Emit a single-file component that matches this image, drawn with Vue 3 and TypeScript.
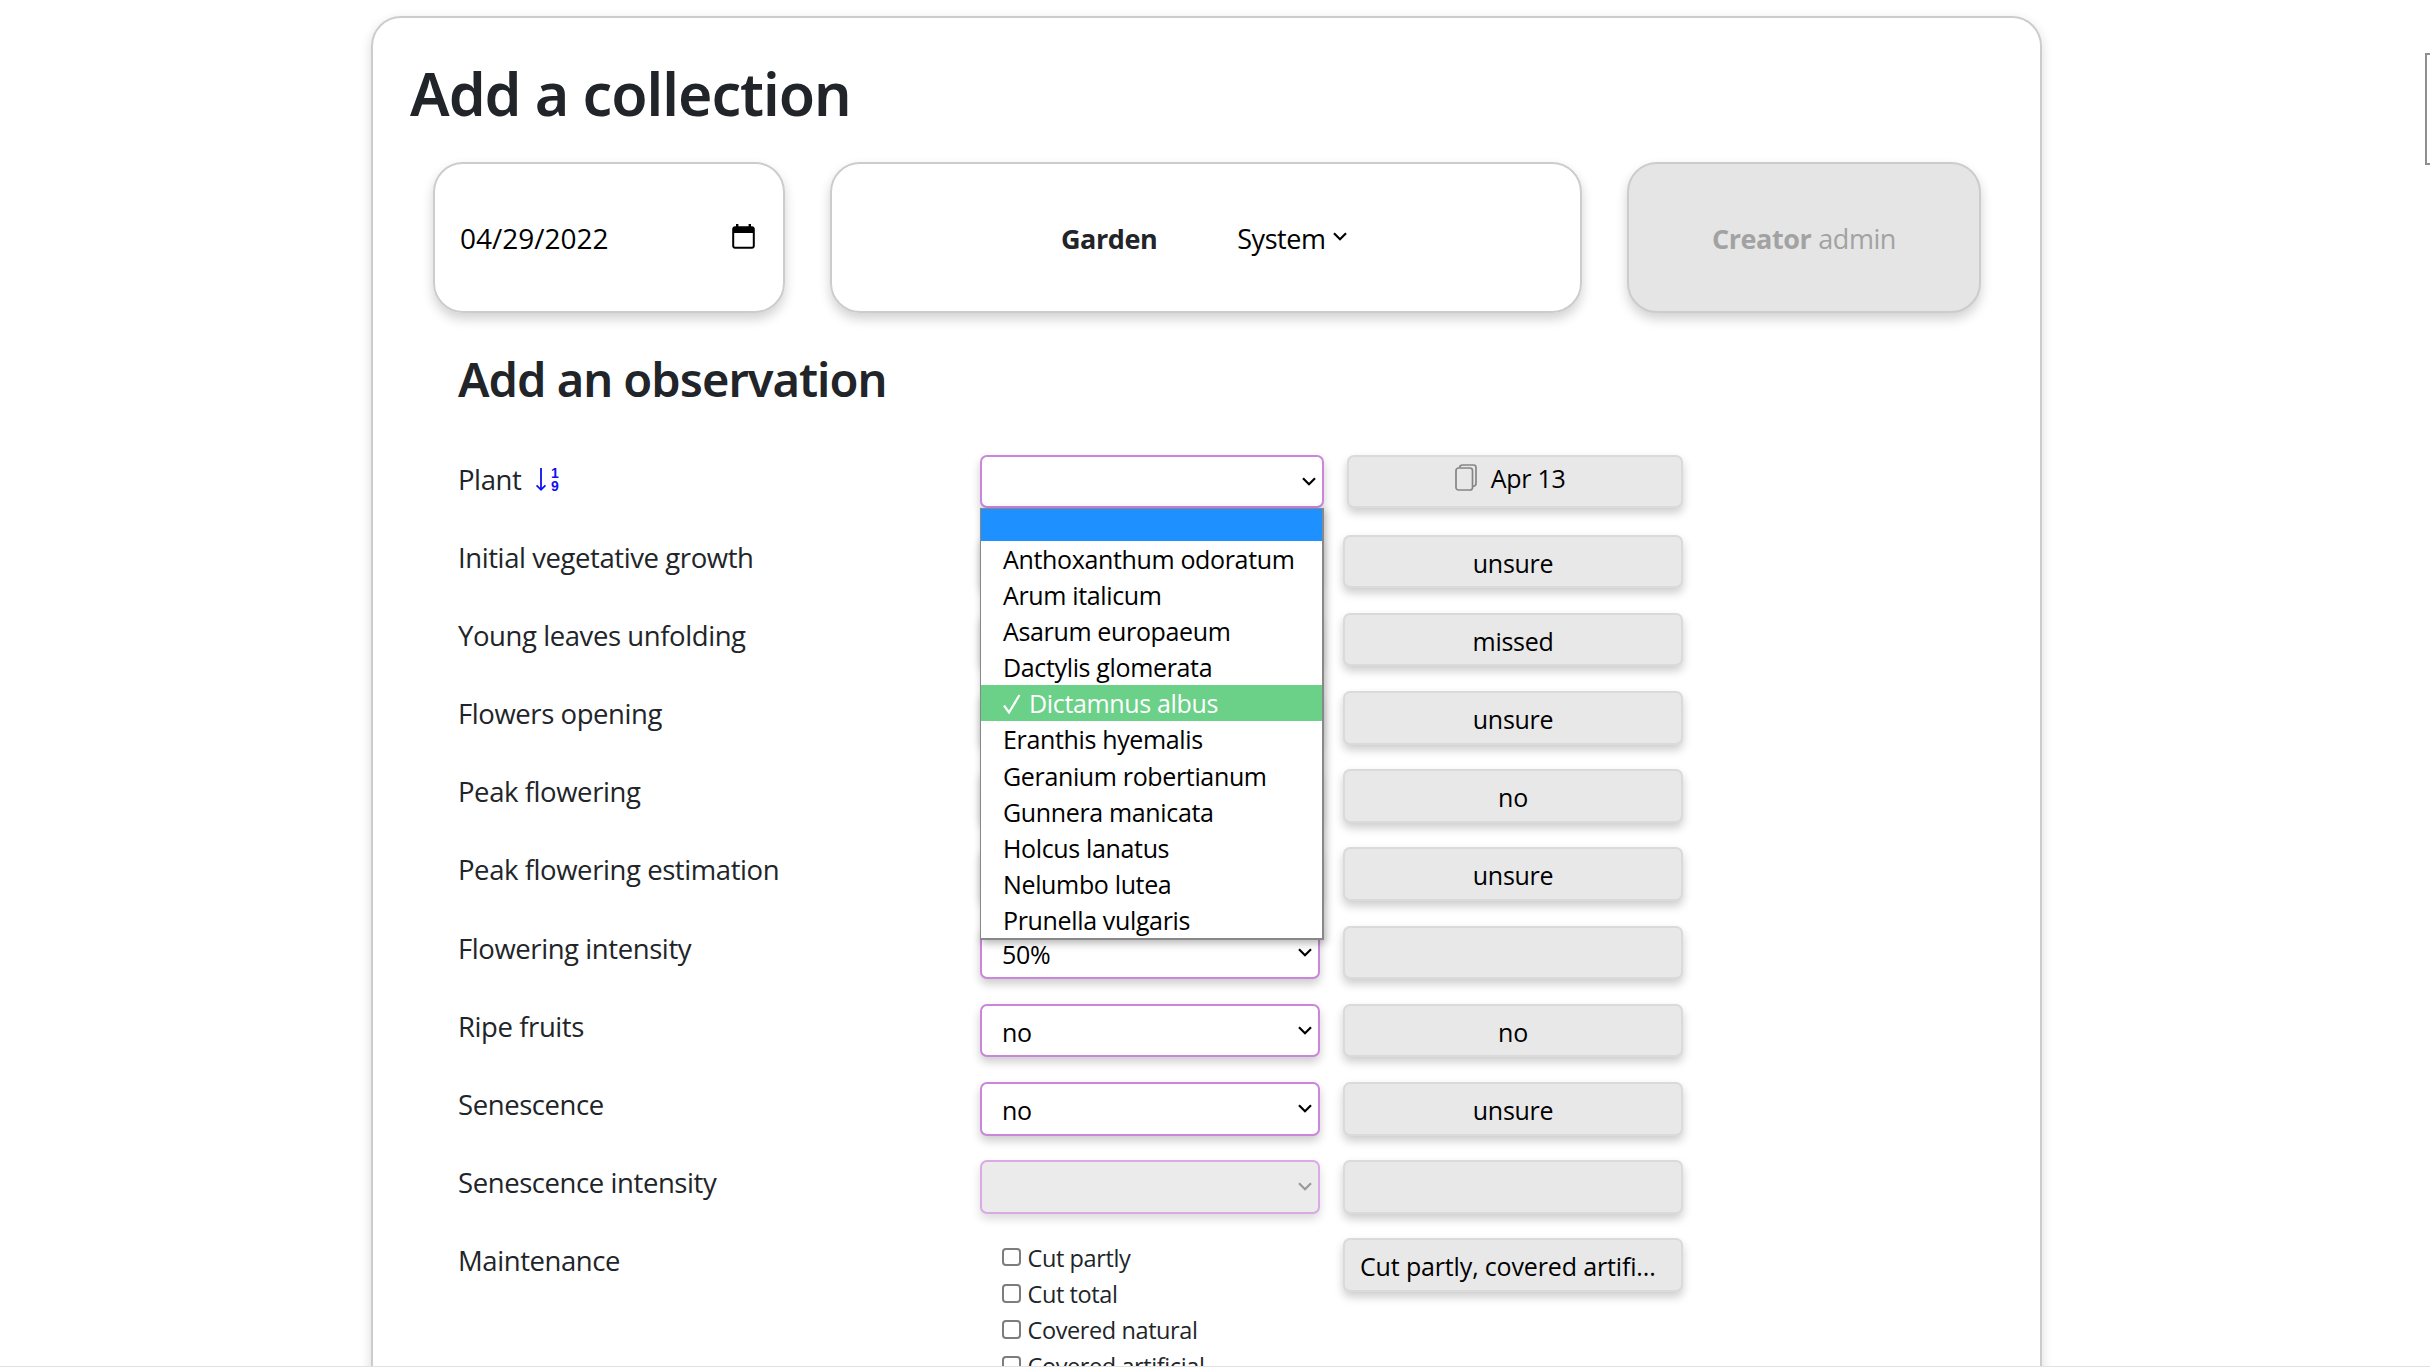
<script setup lang="ts">
interface Phase {
  label: string
  value: string
  previous: string
  disabled?: boolean
}

const phases: Phase[] = [
  { label: 'Initial vegetative growth', value: '', previous: 'unsure' },
  { label: 'Young leaves unfolding', value: '', previous: 'missed' },
  { label: 'Flowers opening', value: '', previous: 'unsure' },
  { label: 'Peak flowering', value: '', previous: 'no' },
  { label: 'Peak flowering estimation', value: '', previous: 'unsure' },
  { label: 'Flowering intensity', value: '50%', previous: '' },
  { label: 'Ripe fruits', value: 'no', previous: 'no' },
  { label: 'Senescence', value: 'no', previous: 'unsure' },
  { label: 'Senescence intensity', value: '', previous: '', disabled: true },
]

const plants: string[] = [
  'Anthoxanthum odoratum',
  'Arum italicum',
  'Asarum europaeum',
  'Dactylis glomerata',
  'Dictamnus albus',
  'Eranthis hyemalis',
  'Geranium robertianum',
  'Gunnera manicata',
  'Holcus lanatus',
  'Nelumbo lutea',
  'Prunella vulgaris',
]
const observed = 'Dictamnus albus'

const maintenance: string[] = ['Cut partly', 'Cut total', 'Covered natural', 'Covered artificial']
</script>

<template>
  <div class="page">
    <main class="collection">
      <h1>Add a collection</h1>

      <div class="meta">
        <div class="tile date">
          <span>04/29/2022</span>
          <svg class="calendar" viewBox="0 0 23 25">
            <path d="M3 3.2h17a1.8 1.8 0 0 1 1.8 1.8v17a1.8 1.8 0 0 1-1.8 1.8H3A1.8 1.8 0 0 1 1.2 22V5A1.8 1.8 0 0 1 3 3.2z" fill="none" stroke="#000" stroke-width="2" />
            <path d="M1 3h21v6H1zM4 0h2.4v4H4zM16.6 0H19v4h-2.4z" fill="#000" />
          </svg>
        </div>
        <div class="tile garden">
          <b>Garden</b>
          <span class="system">System</span>
          <svg class="chevron small" viewBox="0 0 14 9"><path d="M1 1.2l6 6 6-6" /></svg>
        </div>
        <div class="tile creator"><b>Creator</b><span>admin</span></div>
      </div>

      <h2>Add an observation</h2>

      <div class="rows">
        <div class="row">
          <div class="label">
            Plant
            <svg class="sort" viewBox="0 0 25 25">
              <path d="M6 1v21M1.600 18.400L6 22.800l4.400-4.400" fill="none" stroke="#1010f5" stroke-width="1.800" />
              <text x="20" y="10.500" text-anchor="middle">1</text>
              <text x="20" y="24" text-anchor="middle">9</text>
            </svg>
          </div>
          <div class="cell">
            <div class="select open">
              <svg class="chevron" viewBox="0 0 14 9"><path d="M1 1.2l6 6 6-6" /></svg>
            </div>
            <ul class="options">
              <li class="blank"></li>
              <li v-for="plant in plants" :key="plant" :class="{ observed: plant === observed }">
                <svg v-if="plant === observed" class="tick" viewBox="0 0 18 20"><path d="M1 11.500l5 7L16.500 1" /></svg>{{ plant }}
              </li>
            </ul>
          </div>
          <div class="previous copy">
            <svg class="pages" viewBox="0 0 22 27">
              <rect x="1" y="4" width="16.500" height="22" rx="2.500" />
              <path d="M4.500 3.500Q5 1 7.500 1H18.500Q21 1 21 3.500V19.500Q21 22 18 22.500" />
            </svg>
            Apr 13
          </div>
        </div>

        <div v-for="phase in phases" :key="phase.label" class="row">
          <div class="label">{{ phase.label }}</div>
          <div class="cell">
            <div class="select" :class="{ disabled: phase.disabled }">
              {{ phase.value }}
              <svg class="chevron" viewBox="0 0 14 9"><path d="M1 1.2l6 6 6-6" /></svg>
            </div>
          </div>
          <div class="previous">{{ phase.previous }}</div>
        </div>

        <div class="row">
          <div class="label">Maintenance</div>
          <div class="checks">
            <label v-for="item in maintenance" :key="item"><i></i>{{ item }}</label>
          </div>
          <div class="previous summary">Cut partly, covered artifi...</div>
        </div>
      </div>
    </main>
    <div class="side-box"></div>
  </div>
</template>

<style>
body {
  background: #fff;
}
</style>

<style scoped>
.page {
  position: relative;
  box-sizing: border-box;
  height: 1367px;
  overflow: hidden;
  padding-top: 16px;
  font-family: "Open Sans", "Noto Sans", sans-serif;
  color: #212529;
}
.page *,
.page::after {
  box-sizing: border-box;
}
.page::after {
  content: "";
  position: absolute;
  left: 0;
  right: 0;
  bottom: 0;
  height: 1px;
  background: #e2e2e2;
}
.collection {
  width: 1671px;
  height: 1500px;
  margin-left: 371px;
  padding: 40px 59px 0 37px;
  border: 2px solid #ccc;
  border-radius: 30px;
  box-shadow: 0 4px 12px rgba(0, 0, 0, 0.15);
}
h1,
h2 {
  margin: 0;
  font-family: "Noto Sans", sans-serif;
  font-weight: 600;
}
h1 {
  font-size: 59px;
  line-height: 70px;
  letter-spacing: -1.02px;
}
h2 {
  margin: 36px 0 0 48px;
  font-size: 47px;
  line-height: 60px;
  letter-spacing: -1px;
}
.meta {
  display: flex;
  gap: 45px;
  height: 151px;
  margin: 34px 0 0 23px;
  font-size: 27px;
  letter-spacing: -0.45px;
}
.tile {
  display: flex;
  align-items: center;
  padding-top: 1px;
  border: 2px solid #ccc;
  border-radius: 30px;
  box-shadow: 0 6px 12px rgba(0, 0, 0, 0.18);
}
.date {
  width: 352px;
  justify-content: space-between;
  padding: 0 28px 0 25px;
  font-size: 28px;
  letter-spacing: 0;
  color: #000;
}
.calendar {
  width: 23px;
  height: 25px;
  margin-bottom: 2px;
}
.garden {
  width: 752px;
  padding-left: 229px;
}
.system {
  margin-left: 80px;
  color: #000;
}
.creator {
  flex: 1;
  justify-content: center;
  gap: 7px;
  background: #e5e5e5;
  color: #a2a2a2;
}
.chevron {
  display: block;
  width: 14px;
  height: 9px;
  fill: none;
  stroke: #000;
  stroke-width: 2.2;
}
.small {
  margin: -3px 0 0 7px;
}
.rows {
  margin: 47.5px 0 0 47px;
}
.row {
  display: grid;
  grid-template-columns: 523px 363px 340px;
  align-items: start;
  height: 78.2px;
}
.label {
  padding-left: 1px;
  font-size: 27.5px;
  line-height: 45.6px;
  letter-spacing: -0.42px;
  white-space: nowrap;
}
.sort {
  width: 25px;
  height: 25px;
  margin: 0 0 -2px 7px;
  overflow: visible;
  font: 700 14px "Liberation Sans", sans-serif;
  letter-spacing: 0;
  fill: #1010f5;
}
.cell {
  position: relative;
}
.select {
  display: flex;
  justify-content: space-between;
  width: 340px;
  height: 53.5px;
  padding: 0 6px 0 20px;
  border: 2px solid #cb86dc;
  border-radius: 7px;
  background: #fff;
  box-shadow: 0 5px 10px rgba(0, 0, 0, 0.2);
  color: #000;
  font-size: 25px;
  line-height: 52px;
  letter-spacing: -0.3px;
}
.select .chevron {
  margin: 20px 0 0 auto;
}
.open {
  width: 344px;
  margin-top: -2px;
}
.disabled {
  background: #ebebeb;
  border-color: #dba9e6;
  box-shadow: 0 5px 10px rgba(0, 0, 0, 0.14);
}
.disabled .chevron {
  stroke: #999;
}
.options {
  position: absolute;
  top: 51px;
  left: 0;
  z-index: 2;
  width: 344px;
  margin: 0;
  padding: 0;
  list-style: none;
  border: 1px solid #888;
  border-width: 1px 2px 2px 1px;
  background: #fff;
  box-shadow: 2px 3px 8px rgba(0, 0, 0, 0.3);
  color: #000;
  font-size: 25px;
  line-height: 36.1px;
  letter-spacing: -0.35px;
}
.options li {
  height: 36.1px;
  padding-left: 22px;
  white-space: nowrap;
}
.options .blank {
  height: 32.5px;
  background: #1e90ff;
}
.options .observed {
  background: #6bd088;
  color: #fff;
}
.tick {
  width: 18px;
  height: 20px;
  margin: 0 8px -1px 0;
  fill: none;
  stroke: #fff;
  stroke-width: 2.2;
}
.previous {
  height: 53.5px;
  border: 2px solid #dadada;
  border-radius: 7px;
  background: #e8e8e8;
  box-shadow: 0 5px 10px rgba(0, 0, 0, 0.2);
  color: #000;
  font-size: 25px;
  line-height: 52px;
  letter-spacing: -0.3px;
  text-align: center;
  white-space: nowrap;
}
.copy {
  margin: -2px 0 0 4px;
  padding-right: 10px;
  line-height: 43.5px;
}
.pages {
  width: 22px;
  height: 27px;
  margin: 0 8px -3px 0;
  fill: none;
  stroke: #858585;
  stroke-width: 1.7;
}
.summary {
  padding-left: 15px;
  letter-spacing: -0.15px;
  text-align: left;
}
.checks {
  padding: 1.3px 0 0 22px;
  font-size: 23.5px;
  letter-spacing: -0.4px;
}
.checks label {
  display: flex;
  align-items: center;
  height: 36.1px;
  white-space: nowrap;
}
.checks i {
  width: 18.5px;
  height: 18.5px;
  margin: -1px 7px 0 0;
  border: 2px solid #7d7d7d;
  border-radius: 4px;
}
.side-box {
  position: absolute;
  left: 2425px;
  top: 53px;
  width: 30px;
  height: 112px;
  border: 2px solid #8f8f8f;
}
</style>
